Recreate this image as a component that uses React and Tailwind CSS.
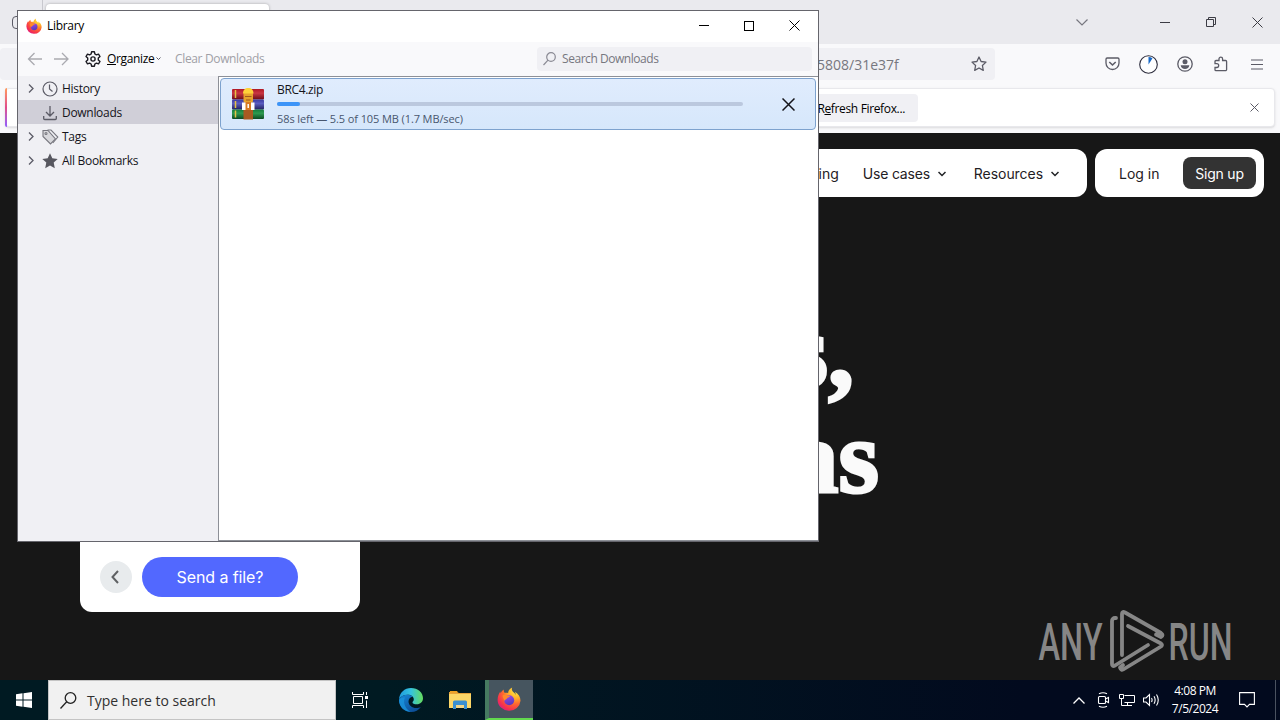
import { useId } from "react";

const FirefoxLogo = ({ size }) => {
  const id = useId();
  return (
    <svg width={size} height={size} viewBox="0 0 24 24">
      <defs>
        <radialGradient id={`${id}f`} cx="0.8" cy="0.12" r="1.05">
          <stop offset="0" stopColor="#fff04a" />
          <stop offset="0.3" stopColor="#ffb52b" />
          <stop offset="0.55" stopColor="#ff6a2f" />
          <stop offset="0.82" stopColor="#f5304f" />
          <stop offset="1" stopColor="#d8188f" />
        </radialGradient>
        <linearGradient id={`${id}g`} x1="0" y1="0" x2="0.3" y2="1">
          <stop offset="0" stopColor="#a04be8" />
          <stop offset="1" stopColor="#5a3bc0" />
        </linearGradient>
      </defs>
      <path
        d="M15.2.6c-1 2.2.2 3.6 1.7 5 .9.9 1.5 1.5 1.9 2.3-.1-1.3-.6-2.5-1-3.2 3.6 2 5.7 5.3 5.7 9A11.2 10.9 0 0 1 12 23.7 11.2 10.9 0 0 1 .6 12.9C.6 9.3 2 6.3 3.4 4.6c0 .8.1 1.3.3 1.7.8-1.6 1.8-2.9 3-3.7-.1 1.4.2 2.3.8 3.2 1.2-.3 2.5-.2 3.6.2C11.2 3.8 12.8 1.6 15.2.6z"
        fill={`url(#${id}f)`}
      />
      <circle cx="12.2" cy="13.2" r="5" fill={`url(#${id}g)`} />
      <path d="M5.5 8.5c1.8-1.3 4-.8 5 .2 1-.2 2.3 0 2.7.6-1 1.2-2.6 1-3.2 2.2-.4.9-2 .8-2.6 2.5-.6-2-1.8-3.5-1.9-5.5z" fill="#ff8a2a" />
    </svg>
  );
};

const EdgeLogo = () => (
  <svg width="26" height="26" viewBox="0 0 26 26">
    <defs>
      <linearGradient id="edgeTop" x1="0" y1="0.4" x2="1" y2="0.4">
        <stop offset="0" stopColor="#1f9ade" />
        <stop offset="0.5" stopColor="#35c3df" />
        <stop offset="1" stopColor="#66dd5c" />
      </linearGradient>
      <linearGradient id="edgeLow" x1="0" y1="0" x2="0.8" y2="1">
        <stop offset="0" stopColor="#1788d8" />
        <stop offset="1" stopColor="#0c4a92" />
      </linearGradient>
    </defs>
    <path d="M1 12.5C1.5 5.5 6.5 1 13 1c7 0 12 4.7 12 10.3 0 3.6-2.7 6-6.2 6-2.6 0-4.3-.9-4.3-1.9 0-.8 1.3-1.2 1.3-3.1 0-2.5-2.7-4.5-6-4.5C5.8 7.8 2.5 9.5 1 12.5z" fill="url(#edgeTop)" />
    <path d="M1 12.5C2.5 9.5 5.8 7.8 9.8 7.8c2 0 3.8.8 4.9 2-2.5.3-4.2 2.3-4.2 4.7 0 3.5 3.4 6.6 7.8 6.6 1.8 0 3.3-.5 4.6-1.1C20.8 23 17.3 25 13 25 6.4 25 1 20 1 13z" fill="url(#edgeLow)" />
    <path d="M7 10.5c-2 3.5-1 10.5 5.5 14.4C6.5 24.6 1.5 20 1 13.5c.8-2 3-3.2 6-3z" fill="#1a94dc" opacity="0.8" />
  </svg>
);

const ExplorerLogo = () => (
  <svg width="22" height="18" viewBox="0 0 22 18">
    <path d="M0 1h8l2 1h12v15H0z" fill="#e8a33a" />
    <path d="M0 3h22v14H0z" fill="#fcd667" />
    <path d="M1 0h7l1 1.5H1z" fill="#f0a020" />
    <path d="M4 11a1.5 1.5 0 0 1 1.5-1.5h11A1.5 1.5 0 0 1 18 11v7h-3v-4H7v4H4z" fill="#3a8fd0" />
    <path d="M7.5 14h7v3h-7z" fill="#f2d58a" />
  </svg>
);

const ZipIcon = () => (
  <svg width="34" height="32" viewBox="0 0 34 32">
    <defs>
      <linearGradient id="zr" x1="0" y1="0" x2="0" y2="1">
        <stop offset="0" stopColor="#b01824" />
        <stop offset="0.4" stopColor="#c93643" />
        <stop offset="1" stopColor="#6a0c18" />
      </linearGradient>
      <linearGradient id="zb" x1="0" y1="0" x2="0" y2="1">
        <stop offset="0" stopColor="#3b3ba0" />
        <stop offset="0.4" stopColor="#5a5cc0" />
        <stop offset="1" stopColor="#22225e" />
      </linearGradient>
      <linearGradient id="zg" x1="0" y1="0" x2="0" y2="1">
        <stop offset="0" stopColor="#157a3b" />
        <stop offset="0.4" stopColor="#2e9a50" />
        <stop offset="1" stopColor="#0b4a22" />
      </linearGradient>
    </defs>
    <rect x="1" y="1" width="32" height="10.5" rx="1" fill="url(#zr)" />
    <rect x="1" y="11.5" width="32" height="10" rx="1" fill="url(#zb)" />
    <rect x="1" y="21.5" width="32" height="9.5" rx="1" fill="url(#zg)" />
    <path d="M4.5 2v8M4.5 13v7M4.5 22.5v7" stroke="#e5c145" strokeWidth="1.5" />
    <rect x="12.5" y="21" width="9.5" height="10.5" fill="#a85a22" />
    <rect x="12.5" y="3" width="9.5" height="12" rx="2" fill="#e6a22c" />
    <path d="M12 5.5C12 2 14 0 17.2 0s5.3 2 5.3 5.5z" fill="#ffd23a" />
    <path d="M14 8.500h6.500M15 12h4.500" stroke="#a0591a" strokeWidth="1.2" />
    <path d="M11 14.500h12.500v7.500H11z" fill="#fff" />
    <path d="M14.500 14h5.500v8h-5.500z" fill="#d97a20" />
    <path d="M17.200 16v4" stroke="#fff" strokeWidth="1.5" />
  </svg>
);

const Chevron = ({ className }) => (
  <svg className={className} width="8" height="6" viewBox="0 0 8 6" fill="none" stroke="currentColor" strokeWidth="1.5">
    <path d="M.5 1L4 4.500 7.500 1" />
  </svg>
);

const Cross = ({ size, width = 1 }) => (
  <svg width={size} height={size} viewBox={`0 0 ${size} ${size}`} fill="none" stroke="currentColor" strokeWidth={width}>
    <path d={`M.5.5L${size - 0.5} ${size - 0.5}M${size - 0.5}.5L.5 ${size - 0.5}`} />
  </svg>
);

const treeIcons = {
  History: (
    <svg width="16" height="16" viewBox="0 0 16 16" fill="none" stroke="#5b5b66" strokeWidth="1.2">
      <circle cx="8" cy="8" r="7" />
      <path d="M7.5 3.5V8l3 2.5" />
    </svg>
  ),
  Downloads: (
    <svg width="16" height="16" viewBox="0 0 16 16" fill="none" stroke="#5b5b66" strokeWidth="1.3">
      <path d="M8 1v10M4 7l4 4 4-4M1.7 11v2.5a1 1 0 0 0 1 1h10.6a1 1 0 0 0 1-1V11" />
    </svg>
  ),
  Tags: (
    <svg width="17" height="16" viewBox="0 0 17 16" fill="#d8d8dc" stroke="#77777f" strokeWidth="1.1">
      <path d="M5.5 1H9l6.8 7-5 6" fill="none" />
      <path d="M1 1.5v6l7.5 7.5 5-5L6 1.5z" />
      <circle cx="4" cy="4.5" r="1" fill="#fff" />
    </svg>
  ),
  "All Bookmarks": (
    <svg width="16" height="16" viewBox="0 0 16 16" fill="#57575f">
      <path d="M8 .3l2.3 4.9 5.4.7-4 3.7 1.1 5.6L8 12.500l-4.800 2.700 1.100-5.600-4-3.700 5.400-.7z" />
    </svg>
  ),
};

const tree = [
  { label: "History", open: true },
  { label: "Downloads", selected: true },
  { label: "Tags", open: true },
  { label: "All Bookmarks", open: true },
];

function BrowserChrome() {
  return (
    <div className="h-[133px] bg-[#f9f9fb] text-[#5b5b66]">
      <div className="flex h-11 items-center justify-between bg-[#eaeaee]">
        <div className="flex h-full w-[269px]">
          <div className="flex w-[43px] items-center border-r border-[#c8c8ce] pl-3">
            <div className="h-[13px] w-4 rounded-sm border border-[#5b5b66]" />
          </div>
          <div className="mt-1 ml-[3px] h-9 grow rounded bg-white shadow-[0_0_3px_rgba(0,0,0,0.3)]" />
        </div>
        <div className="flex h-full items-center pr-[17px] text-[#3c3c44]">
          <svg className="mr-[72px] text-[#77777f]" width="12" height="7" viewBox="0 0 12 7" fill="none" stroke="currentColor" strokeWidth="1.2">
            <path d="M.5.5L6 6 11.5.5" />
          </svg>
          <div className="mr-9 h-px w-[10px] bg-[#3c3c44]" />
          <svg className="mr-9" width="10" height="10" viewBox="0 0 10 10" fill="none" stroke="currentColor">
            <path d="M.5 2.500h7v7h-7zM2.500 2.500v-2h7v7h-2" />
          </svg>
          <Cross size={11} />
        </div>
      </div>
      <div className="flex h-11 items-center justify-between pr-[17px]">
        <div className="mb-1 flex h-8 w-[995px] items-center justify-between rounded bg-[#f0f0f4] pr-2">
          <span className="pt-0.5 pl-[817px] font-['Open_Sans'] text-sm text-[#77777f]">5808/31e37f</span>
          <svg width="16" height="16" viewBox="0 0 16 16" fill="none" stroke="currentColor" strokeWidth="1.3" strokeLinejoin="round">
            <path d="M8 1l2.1 4.5 4.9.6-3.6 3.4.9 4.9L8 12l-4.3 2.4.9-4.9L1 6.100l4.900-.6z" />
          </svg>
        </div>
        <div className="mb-1 flex items-center gap-5">
          <svg width="15" height="14" viewBox="0 0 15 14" fill="none" stroke="currentColor" strokeWidth="1.3">
            <path d="M2.2 1h10.6A1.3 1.3 0 0 1 14 2.3V6a6.5 6.500 0 0 1-13 0V2.300A1.300 1.300 0 0 1 2.200 1z" />
            <path d="M4.3 5l3.2 3 3.2-3" strokeWidth="1.6" />
          </svg>
          <svg className="-mr-px -ml-px" width="19" height="19" viewBox="0 0 19 19">
            <circle cx="9.5" cy="9.5" r="8.8" fill="#fff" stroke="#2c2c3c" strokeWidth="1.1" />
            <path d="M9.5 9.5V2a7.500 7.500 0 0 1 4 1.200z" fill="#1668c8" />
          </svg>
          <svg width="16" height="16" viewBox="0 0 16 16" fill="currentColor">
            <circle cx="8" cy="8" r="7.2" fill="none" stroke="currentColor" strokeWidth="1.3" />
            <circle cx="8" cy="5.7" r="2.5" />
            <path d="M3.7 9.300h8.600c0 2.200-2 3.700-4.300 3.700s-4.300-1.500-4.300-3.700z" />
          </svg>
          <svg width="16" height="16" viewBox="0 0 16 16" fill="none" stroke="currentColor" strokeWidth="1.3">
            <path d="M2 7.500V5.500a1 1 0 0 1 1-1h3V3a1.800 1.800 0 0 1 3.600 0v1.500h3a1 1 0 0 1 1 1v8a1.200 1.200 0 0 1-1.200 1.200H3a1 1 0 0 1-1-1v-2.200h1.800a1.900 1.900 0 0 0 0-3.800H2z" />
          </svg>
          <svg className="ml-0.5" width="12" height="11" viewBox="0 0 12 11" stroke="currentColor" strokeWidth="1.2">
            <path d="M0 1h12M0 5.500h12M0 10h12" />
          </svg>
        </div>
      </div>
      <div className="px-[5px]">
        <div className="flex h-[39px] items-center justify-between rounded border border-[#e8e8ec] bg-white pr-[15px] shadow-sm">
          <div className="-ml-px h-[39px] w-0.5 rounded-l bg-gradient-to-b from-[#ff9a5a] via-[#e04a8a] to-[#9059ff]" />
          <div className="mr-auto ml-[700px] flex h-7 w-[211px] items-center justify-end rounded-sm bg-[#f0f0f4] pt-0.5 pr-[13px] font-['Open_Sans'] text-xs tracking-[-0.35px] text-black">
            R<u>e</u>fresh Firefox...
          </div>
          <Cross size={9} />
        </div>
      </div>
    </div>
  );
}

function WebPage() {
  return (
    <div className="flex h-[547px] flex-col overflow-hidden bg-[#171717]">
      <div className="flex justify-end gap-2 pt-4 pr-4 font-[Inter] text-sm text-[#1f2024]">
        <div className="flex h-12 w-[360px] items-center justify-end rounded-xl bg-white pt-0.5 pr-7">
          <span>Pricing</span>
          <span className="ml-6 tracking-[-0.2px]">Use cases</span>
          <Chevron className="ml-2" />
          <span className="ml-7 tracking-[-0.05px]">Resources</span>
          <Chevron className="ml-2" />
        </div>
        <div className="flex h-12 w-[169px] items-center justify-between rounded-xl bg-white pr-2 pl-6">
          <span className="pt-0.5">Log in</span>
          <span className="flex h-8 w-[73px] items-center justify-center rounded-lg bg-[#333] pt-0.5 tracking-[-0.2px] text-white">Sign up</span>
        </div>
      </div>
      <div className="mt-[101px] w-[879px] text-right font-['Liberation_Serif'] text-[104px] leading-[106px] font-bold text-[#fafafa] [-webkit-text-stroke:3px_#fafafa]">
        <div className="pr-[25px]">files,</div>
        <div>ideas</div>
      </div>
      <div className="-mt-[58px] ml-20 flex h-[160px] w-[280px] shrink-0 items-end rounded-xl bg-white px-5 pb-[15px]">
        <div className="mb-1 flex size-8 items-center justify-center rounded-full bg-[#e8ebed] text-[#5f6163]">
          <svg className="mr-0.5" width="8" height="14" viewBox="0 0 8 14" fill="none" stroke="currentColor" strokeWidth="2">
            <path d="M7 1L1.500 7 7 13" />
          </svg>
        </div>
        <div className="ml-[10px] flex h-10 w-[156px] items-center justify-center rounded-full bg-[#5268ff] font-[Inter] text-base tracking-[-0.1px] text-white">
          Send a file?
        </div>
      </div>
    </div>
  );
}

function Watermark() {
  return (
    <svg className="absolute top-[606px] left-[1034px] overflow-visible" width="206" height="70" viewBox="0 0 206 70" fill="#868686">
      <g fontFamily="Roboto" fontSize="52" fontWeight="500">
        <text x="4.5" y="53.5" textLength="64" lengthAdjust="spacingAndGlyphs">ANY</text>
        <text x="134.5" y="53.5" textLength="64" lengthAdjust="spacingAndGlyphs">RUN</text>
      </g>
      <g fill="none" stroke="#868686" strokeWidth="3.8" strokeLinejoin="round" strokeLinecap="round">
        <path d="M82 12h-1a3 3 0 0 0-3 3v43q0 3 3 1.500L114 39" />
        <path d="M88 49V8q0-3 3-1.500l36 20.500q3 2 0 4l-5-2.500" />
        <path d="M94 20l33 17.500q2 1.500 0 3L90 63q-3 2-4-1.500l3-2.500" />
      </g>
    </svg>
  );
}

function LibraryWindow() {
  return (
    <div className="absolute top-[10px] left-[17px] flex h-[532px] w-[802px] flex-col border border-[#65656c] bg-white font-['Open_Sans'] text-xs tracking-[-0.2px] text-[#15141a]">
      <div className="flex h-[31px] shrink-0 items-center pr-[18px] pb-px pl-2">
        <FirefoxLogo size={16} />
        <span className="ml-[5px] tracking-[-0.3px] text-black">Library</span>
        <div className="ml-auto flex items-center pb-px text-black">
          <div className="mr-[35px] h-px w-[10px] bg-black" />
          <div className="mr-[35px] size-[10px] border border-black" />
          <Cross size={11} />
        </div>
      </div>
      <div className="flex h-[34px] shrink-0 items-center bg-[#f9f9fb] pr-[6px] pl-[9px]">
        <svg width="42" height="14" viewBox="0 0 42 14" fill="none" stroke="#aaaab0" strokeWidth="1.3">
          <path d="M15 7H1.500M7.500 1l-6 6 6 6M27 7H41M35 1l6 6-6 6" />
        </svg>
        <svg className="ml-4" width="16" height="16" viewBox="0 0 16 16" fill="none" stroke="#1c1b22" strokeWidth="1.4" strokeLinejoin="round">
          <path d="M6.6.8h2.8l.5 2.200 1.500.8 2.100-.7 1.500 2.400-1.700 1.600v1.800l1.700 1.600-1.500 2.400-2.100-.7-1.500.8-.5 2.200H6.600L6.100 13l-1.500-.8-2.100.7L1 10.500l1.700-1.600V7.100L1 5.500l1.500-2.400 2.100.7L6.100 3z" />
          <circle cx="8" cy="8" r="2.1" />
        </svg>
        <span className="ml-1.5 w-[49px] tracking-[-0.35px] text-black"><u>O</u>rganize</span>
        <svg width="5" height="4" viewBox="0 0 5 4" fill="none" stroke="#5b5b66"><path d="M.5.5l2 2 2-2" /></svg>
        <span className="ml-[14px] tracking-[-0.35px] text-[#a0a0a6]">Clear Downloads</span>
        <div className="ml-auto flex h-6 w-[275px] items-center rounded bg-[#f0f0f4] pl-1.5 text-[#77777f]">
          <svg width="13" height="14" viewBox="0 0 13 14" fill="none" stroke="#8a8a94" strokeWidth="1.2">
            <circle cx="8" cy="5" r="4.3" />
            <path d="M5 8.200L.5 13" />
          </svg>
          <span className="ml-1.5 tracking-[-0.45px]">Search Downloads</span>
        </div>
      </div>
      <div className="flex grow">
        <div className="w-[200px] bg-[#f0f0f4]">
          {tree.map((item) => (
            <div key={item.label} className={`flex h-6 items-center pt-px pl-[10px] ${item.selected ? "bg-[#d0cfd8]" : ""}`}>
              <svg className={item.open ? "" : "invisible"} width="6" height="9" viewBox="0 0 6 9" fill="none" stroke="#5b5b66" strokeWidth="1.3">
                <path d="M1 .5l4 4-4 4" />
              </svg>
              <span className="ml-2 w-5">{treeIcons[item.label]}</span>
              <span className="pt-px tracking-[-0.3px]">{item.label}</span>
            </div>
          ))}
        </div>
        <div className="grow border-t border-b border-l border-[#8d9097] py-px pr-0.5 pl-px">
          <div className="flex h-[52px] items-center rounded border border-[#7da2ce] bg-gradient-to-b from-[#e0ecfd] to-[#d6e7fb] pr-5 pl-[10px]">
            <ZipIcon />
            <div className="ml-3 flex w-[466px] flex-col">
              <span className="leading-4 tracking-[-0.35px]">BRC4.zip</span>
              <div className="mt-1 mb-0.5 h-1 rounded-full bg-[#bbc8de]">
                <div className="h-1 rounded-full bg-[#3c94f8]" style={{ width: `${(5.5 / 105) * 95}%` }} />
              </div>
              <span className="mt-[3px] mb-px text-[11px] leading-[15px] tracking-[-0.1px] text-[#48566e]">58s left — 5.5 of 105 MB (1.7 MB/sec)</span>
            </div>
            <div className="ml-auto">
              <Cross size={13} width={1.5} />
            </div>
          </div>
        </div>
      </div>
    </div>
  );
}

function Taskbar() {
  return (
    <div className="flex h-10 items-center bg-gradient-to-r from-[#001a22] from-30% to-[#020a1e] to-80% font-['Open_Sans'] text-white">
      <div className="flex w-12 justify-center">
        <svg width="16" height="16" viewBox="0 0 16 16" fill="#fff">
          <path d="M0 2.200L6.500 1.300v6.200H0zM7.500 1.200L16 0v7.500H7.500zM0 8.500h6.500v6.200L0 13.800zM7.500 8.500H16V16l-8.500-1.200z" />
        </svg>
      </div>
      <div className="flex h-10 w-[288px] items-center border border-[#c4c4c4] bg-[#f1f1f1] pl-[11px] text-[#303030]">
        <svg width="17" height="17" viewBox="0 0 17 17" fill="none" stroke="#222" strokeWidth="1.3">
          <circle cx="10.5" cy="6" r="5.3" />
          <path d="M6.7 9.800L.5 16.500" />
        </svg>
        <span className="ml-[10px] pt-0.5 text-sm">Type here to search</span>
      </div>
      <div className="flex w-12 justify-center">
        <svg width="17" height="16" viewBox="0 0 17 16" fill="none" stroke="#fff">
          <path d="M.5 0v2.500h11V0M.5 16v-2.500h11V16M1.500 4.500h9v7h-9zM14.500 0v3M14.500 8.500V16" />
          <path d="M13 4h3v3h-3z" fill="#fff" stroke="none" />
        </svg>
      </div>
      <div className="ml-0.5 flex w-[50px] justify-center"><EdgeLogo /></div>
      <div className="flex w-12 justify-center"><ExplorerLogo /></div>
      <div className="ml-px flex h-10 w-12 items-center justify-center border-b-2 border-l-4 border-[#62d94e] border-l-[#467a61] bg-[#46555f] pr-1">
        <FirefoxLogo size={24} />
      </div>
      <div className="ml-auto flex h-10 items-center">
        <svg width="12" height="7" viewBox="0 0 12 7" fill="none" stroke="#fff" strokeWidth="1.3"><path d="M.5 6.500L6 1l5.500 5.500" /></svg>
        <svg className="ml-3" width="14" height="16" viewBox="0 0 14 16" fill="none" stroke="#fff" strokeWidth="1.1">
          <rect x="1.5" y="4.5" width="7" height="7" rx="1" />
          <path d="M8.500 7l3-1.500v5l-3-1.500M2 1.800q4-2 8 0M2 14.200q4 2 8 0" />
        </svg>
        <svg className="ml-[8px]" width="17" height="14" viewBox="0 0 17 14" fill="none" stroke="#fff">
          <path d="M5.500 2.500h10v7h-10M8.500 9.500v3M5 12.500h8M.5 1.500h4v4h-4zM2.500 5.500v7H6" />
        </svg>
        <svg className="ml-[7px]" width="17" height="14" viewBox="0 0 17 14" fill="none" stroke="#fff" strokeWidth="1.1">
          <path d="M.5 5h2.500L6.500 1.500v11L3 9H.5zM8.500 5q1.200 2 0 4M11 3.200q2.300 3.800 0 7.600M13.500 1.500q3.500 5.500 0 11" />
        </svg>
        <div className="w-[70px] text-center text-xs leading-[18px] tracking-[-0.45px]">
          <div>4:08 PM</div>
          <div>7/5/2024</div>
        </div>
        <svg className="ml-[9px]" width="16" height="16" viewBox="0 0 16 16" fill="none" stroke="#fff" strokeWidth="1.1">
          <path d="M.6.6h14.800v11.800h-4.900L8 15l-2.500-2.600H.6z" />
        </svg>
        <div className="ml-[20px] h-10 w-px bg-[#4a5260]" />
        <div className="w-1" />
      </div>
    </div>
  );
}

export default function App() {
  return (
    <div className="relative h-[720px] w-[1280px] overflow-hidden">
      <BrowserChrome />
      <WebPage />
      <Taskbar />
      <Watermark />
      <LibraryWindow />
    </div>
  );
}
